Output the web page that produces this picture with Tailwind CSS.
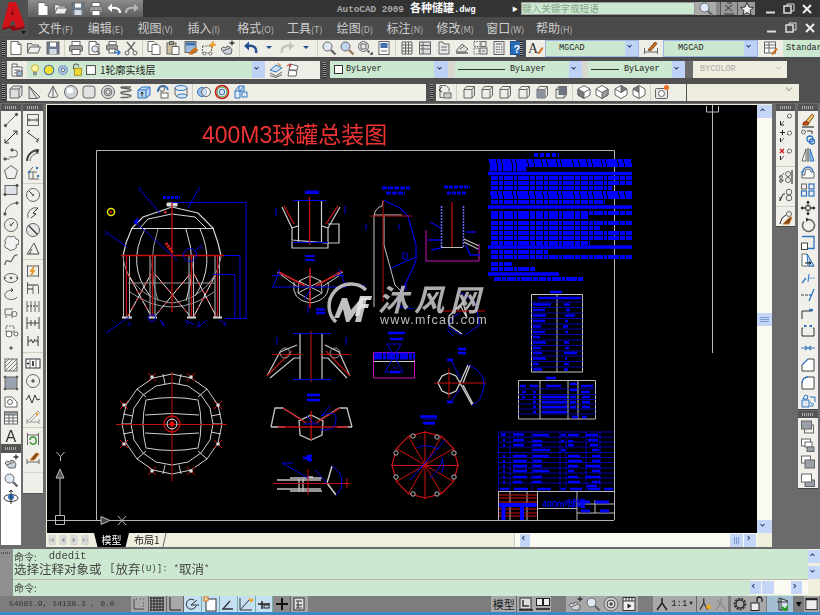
<!doctype html>
<html lang="zh">
<head>
<meta charset="utf-8">
<title>AutoCAD 2009</title>
<script src="https://cdn.jsdelivr.net/npm/@tailwindcss/browser@4"></script>
</head>
<body class="w-[820px] h-[615px] overflow-hidden bg-[#6b6b6b] text-[#222] font-['Noto_Sans_CJK_SC',sans-serif] blur-[0.35px]">

<!-- title + menu -->
<div class="flex h-[38px] bg-[#4a4a4a]">
  <div class="relative w-[28px] h-[37px] bg-[#505050]">
    <svg class="w-[28px] h-[37px]" viewBox="0 0 28 37">
      <path d="M9 2h7l9 24-9 2-2-7H11l-1 5-8 2z" fill="#d3111b"/>
      <path d="M11 15h3l-1.500-6z" fill="#7d0a10"/>
      <path d="M2 28l8-2 4-1 2 3 9-2-2 3-10 2-3-3-7 2z" fill="#8e0b12"/>
      <path d="M21 31h5l-2.500 3z" fill="#111"/>
    </svg>
  </div>
  <div class="flex-1 flex flex-col">
    <div class="h-[17px] flex items-center bg-[#333]">
      <div class="w-[115px] h-[17px] pl-[6px] flex items-center bg-gradient-to-b from-[#8c8c8c] to-[#5e5e5e]" data-icons="new open save print qundo qredo" data-cell="w-[17.800px]"></div>
      <div class="w-[175px] ml-[194px] flex items-baseline whitespace-nowrap">
        <span class="font-['Liberation_Mono',monospace] text-[9.300px] font-bold text-[#aaa]">AutoCAD 2009</span>
        <span class="ml-[6px] text-[11px] font-bold text-white">各种储罐</span><span class="font-['Liberation_Mono',monospace] text-[9px] font-bold text-white">.dwg</span>
      </div>
      <div class="w-[9px] text-[6px] text-white">&#9654;</div>
      <div class="w-[174px] h-[13px] bg-[#cde8d0] border border-[#999] flex items-center text-[9.600px] leading-none text-[#86a58a] whitespace-nowrap">键入关键字或短语</div>
      <div class="w-[21px] h-[13px] bg-[#aaa] flex items-center justify-center" data-icons="zoom" data-cell="w-[16px]"></div>
      <div class="w-[4px] h-[13px] bg-[#888]"></div>
      <div class="w-[17px] h-[13px] bg-[#999] border-l border-[#555] flex items-center justify-center" data-icons="comm" data-cell="w-[16px]"></div>
      <div class="w-[18px] h-[13px] bg-[#999] border-l border-[#555] flex items-center justify-center" data-icons="star" data-cell="w-[16px]"></div>
      <div class="flex ml-[7px] text-white" data-icons="wmin wmax wclose" data-cell="w-[18px]"></div>
    </div>
    <div class="h-[21px] flex items-center pl-[10px] text-[12px] leading-none text-[#cfcfcf] whitespace-nowrap">
      <span class="w-[49.800px]">文件<span class="text-[9px] text-[#bbb]">(F)</span></span>
      <span class="w-[49.800px]">编辑<span class="text-[9px] text-[#bbb]">(E)</span></span>
      <span class="w-[49.800px]">视图<span class="text-[9px] text-[#bbb]">(V)</span></span>
      <span class="w-[49.800px]">插入<span class="text-[9px] text-[#bbb]">(I)</span></span>
      <span class="w-[49.800px]">格式<span class="text-[9px] text-[#bbb]">(O)</span></span>
      <span class="w-[49.800px]">工具<span class="text-[9px] text-[#bbb]">(T)</span></span>
      <span class="w-[49.800px]">绘图<span class="text-[9px] text-[#bbb]">(D)</span></span>
      <span class="w-[49.800px]">标注<span class="text-[9px] text-[#bbb]">(N)</span></span>
      <span class="w-[49.800px]">修改<span class="text-[9px] text-[#bbb]">(M)</span></span>
      <span class="w-[49.800px]">窗口<span class="text-[9px] text-[#bbb]">(W)</span></span>
      <span class="w-[49.800px]">帮助<span class="text-[9px] text-[#bbb]">(H)</span></span>
      <div class="flex ml-auto mr-[1px]" data-icons="wmin wmax wclose" data-cell="w-[19px]"></div>
    </div>
  </div>
</div>

<!-- standard toolbar + styles -->
<div class="h-[20px] flex items-center bg-[#505050]">
  <div class="w-[3px] h-[15px] ml-[2px] mr-[2px] bg-[repeating-linear-gradient(0deg,#222_0_1px,#999_1px_2px)]"></div>
  <div class="w-[509px] h-[17px] flex items-center bg-[#eeede6]" data-icons="new open save | print preview plot cut | copy paste match blockedit pan | undo drop redo drop | zoom zoomb zoomwin prop | palette grid tool stamp tpal calc help" data-cell="w-[18.300px]"></div>
  <div class="w-[3px] h-[15px] ml-[4px] mr-[3px] bg-[repeating-linear-gradient(0deg,#222_0_1px,#999_1px_2px)]"></div>
  <div class="w-[19px] h-[17px] flex items-center justify-center bg-[#eeede6]" data-icons="stylea" data-cell="w-[16px]"></div>
  <div class="w-[94px] h-[17px] flex bg-[#cde8d0] border border-[#9cb6e6]">
    <span class="flex-1 pl-[13px] font-['Liberation_Mono',monospace] text-[8.500px] leading-[15px]">MGCAD</span>
    <span class="w-[13px] flex items-center justify-center bg-[#bfd2f6]" data-icons="chev" data-cell="w-[9px]"></span>
  </div>
  <div class="w-[24px] h-[17px] flex items-center justify-center bg-[#eeede6]" data-icons="styled" data-cell="w-[16px]"></div>
  <div class="w-[95px] h-[17px] flex bg-[#cde8d0] border border-[#9cb6e6]">
    <span class="flex-1 pl-[14px] font-['Liberation_Mono',monospace] text-[8.500px] leading-[15px]">MGCAD</span>
    <span class="w-[13px] flex items-center justify-center bg-[#bfd2f6]" data-icons="chev" data-cell="w-[9px]"></span>
  </div>
  <div class="w-[25px] h-[17px] flex items-center justify-center bg-[#eeede6]" data-icons="stylet" data-cell="w-[16px]"></div>
  <div class="flex-1 h-[17px] pl-[3px] bg-[#cde8d0] overflow-hidden font-['Liberation_Mono',monospace] text-[8.500px] leading-[16px]">Standard</div>
</div>

<!-- layers + properties -->
<div class="h-[23px] flex items-center bg-[#505050]">
  <div class="w-[3px] h-[16px] ml-[2px] mr-[2px] bg-[repeating-linear-gradient(0deg,#222_0_1px,#999_1px_2px)]"></div>
  <div class="w-[313px] h-[18px] flex items-center bg-[#eeede6]">
    <div class="w-[20px] flex justify-center" data-icons="layers" data-cell="w-[16px]"></div>
    <div class="w-[238px] h-[17px] flex items-center bg-[#cde8d0]">
      <div class="flex pl-[1px]" data-icons="bulb sun freeze lock box" data-cell="w-[14px]"></div>
      <span class="flex-1 pl-[2px] text-[10px] leading-none whitespace-nowrap">1轮廓实线层</span>
      <span class="w-[13px] h-[17px] flex items-center justify-center bg-[#bfd2f6]" data-icons="chev" data-cell="w-[9px]"></span>
    </div>
    <div class="flex ml-[2px]" data-icons="layerprev layerstate" data-cell="w-[18px]"></div>
  </div>
  <div class="w-[3px] h-[16px] ml-[3px] mr-[4px] bg-[repeating-linear-gradient(0deg,#222_0_1px,#999_1px_2px)]"></div>
  <div class="w-[118px] h-[17px] flex items-center bg-[#cde8d0]">
    <div class="w-[9px] h-[9px] ml-[4px] mr-[3px] bg-white border border-[#333]"></div>
    <span class="flex-1 font-['Liberation_Mono',monospace] text-[8.500px] leading-none">ByLayer</span>
    <span class="w-[14px] h-[17px] flex items-center justify-center bg-[#bfd2f6]" data-icons="chev" data-cell="w-[9px]"></span>
  </div>
  <div class="w-[7px] h-[17px] bg-[#d9d8d0]"></div>
  <div class="w-[127px] h-[17px] flex items-center bg-[#cde8d0]">
    <div class="w-[47px] h-[1px] ml-[3px] mr-[5px] bg-[#333]"></div>
    <span class="flex-1 font-['Liberation_Mono',monospace] text-[8.500px] leading-none">ByLayer</span>
    <span class="w-[13px] h-[17px] flex items-center justify-center bg-[#bfd2f6]" data-icons="chev" data-cell="w-[9px]"></span>
  </div>
  <div class="w-[6px] h-[17px] bg-[#d9d8d0]"></div>
  <div class="w-[97px] h-[17px] flex items-center bg-[#cde8d0]">
    <div class="w-[28px] h-[1px] ml-[3px] mr-[5px] bg-[#333]"></div>
    <span class="flex-1 font-['Liberation_Mono',monospace] text-[8.500px] leading-none">ByLayer</span>
    <span class="w-[13px] h-[17px] flex items-center justify-center bg-[#bfd2f6]" data-icons="chev" data-cell="w-[9px]"></span>
  </div>
  <div class="w-[8px] h-[17px] bg-[#6b6b6b]"></div>
  <div class="w-[94px] h-[17px] flex items-center bg-[#efeddd]">
    <span class="flex-1 pl-[7px] font-['Liberation_Mono',monospace] text-[8.500px] leading-none text-[#aaa]">BYCOLOR</span>
    <span class="w-[14px] flex items-center justify-center" data-icons="chevg" data-cell="w-[9px]"></span>
  </div>
</div>

<!-- solids + views -->
<div class="h-[22px] flex items-center bg-[#505050]">
  <div class="w-[3px] h-[16px] ml-[2px] mr-[2px] bg-[repeating-linear-gradient(0deg,#222_0_1px,#999_1px_2px)]"></div>
  <div class="relative w-[419px] h-[17px] flex items-center bg-[#eeede6]" data-icons="sbox wedge cone sphere cyl torus helix press sweep loft | union subtract intersect" data-cell="w-[18.300px]"></div>
  <div class="w-[3px] h-[16px] ml-[4px] mr-[3px] bg-[repeating-linear-gradient(0deg,#222_0_1px,#999_1px_2px)]"></div>
  <div class="w-[250px] h-[17px] flex items-center bg-[#eeede6]" data-icons="vnamed | vtop vbot vleft vright vfront vback | iso1 iso2 iso3 iso4 | camera" data-cell="w-[18.400px]"></div>
  <div class="w-[112px] h-[17px] ml-[1px] flex items-center justify-end bg-[#efeddd]" data-icons="chevg" data-cell="w-[14px]"></div>
</div>

<!-- workspace -->
<div class="h-[446px] flex pt-[1px]">
  <div class="w-[46px] flex shrink-0 items-start">
    <div class="w-[20px] ml-[1px] bg-[#f0efe9]">
      <div class="h-[7px] flex items-center justify-center bg-[#555]"><div class="w-[12px] h-[3px] bg-[repeating-linear-gradient(90deg,#aaa_0_1px,#555_1px_2px)]"></div></div>
      <div class="flex flex-col" data-icons="line xline pline polygon rect arc circle cloud spline ellipse earc insert mkblock point hatch gradient region table mtext" data-cell="h-[17.550px]" data-sep="v"></div>
      <div class="h-[9px] flex items-center justify-center bg-[#555]"><div class="w-[12px] h-[3px] bg-[repeating-linear-gradient(90deg,#aaa_0_1px,#555_1px_2px)]"></div></div>
      <div class="h-[92px] flex flex-col bg-white" data-icons="pan zoom orbit" data-cell="h-[17.600px]" data-sep="v"></div>
    </div>
    <div class="w-[20px] ml-[2px] bg-[#f0efe9] border-b border-[#555]">
      <div class="h-[7px] flex items-center justify-center bg-[#555]"><div class="w-[12px] h-[3px] bg-[repeating-linear-gradient(90deg,#aaa_0_1px,#555_1px_2px)]"></div></div>
      <div class="flex flex-col" data-icons="dlin dali darc dord | drad djog ddia dang | dquick dbase dcont dspace dbreak | dtol dcen dinsp djogl | dupd dreas" data-cell="h-[17.600px]" data-sep="v"></div>
      <div class="h-[28px] flex items-end pb-[20px]"><div class="w-full h-px bg-[#d8d6c8]"></div></div>
    </div>
  </div>

  <!-- drawing area -->
  <div class="w-[726px] h-[443px] shrink-0 flex flex-col bg-[#f0eedd]">
    <div class="h-[429px] flex pt-[1px] pl-[1px]">
      <svg class="w-[710px] h-[428px] shrink-0 bg-black" viewBox="47 105 710 428" fill="none" stroke-width="1">
        <!-- sheet frame -->
        <path d="M96.500 520V150.500H614.500V520M47 520.500H614" stroke="#b4b4b4"/>
        <text x="202" y="143" font-size="23" fill="#ee3333" font-family="Liberation Sans,Noto Sans CJK SC,sans-serif">400M3球罐总装图</text>
        <path d="M712.500 105V353M706.500 106v6h12v-6M712.500 106v6" stroke="#bbb"/>
        <circle cx="111" cy="212" r="3.500" stroke="#e8e800" stroke-width="1.500"/><circle cx="111" cy="212" r="1.200" fill="#c00"/>
        <!-- ucs -->
        <path d="M60 515V478M64 520.500H100M55.500 515.500h9v9h-9z" stroke="#bbb"/>
        <path d="M60 469l-4 9h8z" stroke="#bbb" fill="#555"/><path d="M101 516.500l9 4-9 4z" stroke="#bbb" fill="#444"/>
        <path d="M56.500 452l4 4.500 4-4.500M60.500 456.500V461M118 516l8 9M126 516l-8 9" stroke="#bbb"/>

        <!-- sphere elevation -->
        <g stroke="#d8d8d8">
          <path d="M123 256L126 243L132 228L143 217L172 207L198 213L213 228L218 243L221 256" stroke-width="1.200"/>
          <path d="M131 228.500H214M140 228L148 219L172 214L195 217L206 228M145 229Q126 265 150 296M186 229Q198 265 186 301M200 229Q216 265 195 296"/>
          <path d="M167 206h10v-3h-10z" fill="#ddd"/>
          <path d="M123.500 256V317M129.500 256V317M150 256V317M155 256V317M189 256V317M193.500 256V317M215 256V317M219.500 256V317" stroke="#bbb"/>
          <path d="M122 317.500H132M148 317.500H157M187 317.500H196M213 317.500H222" stroke-width="2"/>
        </g>
        <path d="M158 229Q146 265 158 301M123 256C125 280 145 300 172 303C198 300 218 280 221 256M128 283H215M130 292Q172 322 214 292" stroke="#999"/>
        <path d="M128 274L151 316M151 274L128 316M155 274L190 316M190 274L155 316M194 274L216 316M216 274L194 316" stroke="#eee"/>
        <path d="M128 274L151 316M151 274L128 316M155 274L190 316M190 274L155 316M194 274L216 316M216 274L194 316" stroke="#ee3333" stroke-dasharray="4 5"/>
        <path d="M172 203V312M121 255.500H224M126.500 256V316M152.500 256V316M191.500 256V316M217.500 256V316" stroke="#c41010" stroke-width="1.300"/>
        <g stroke="#0000e6">
          <path d="M172 202.500H246V319M224 255.500H240V319M213 274.500H235V319M225 318.500H246M140 190L160 213M198 190L188 208M107 233L127 247M133 220L177 260M129 317L106 333M160 320L165 326M185 320L195 325M207 320L197 328M220 320L226 325"/>
          <circle cx="190" cy="255" r="6.500"/><path d="M195 251L202 245"/>
          <path d="M163 197.500H180" stroke-width="3" stroke-dasharray="3 1"/>
          <path d="M135 224l3-5" stroke-width="3"/>
          <circle cx="152" cy="318" r="3.500"/>
        </g>
        <g fill="#0000e6" font-size="6" font-family="Liberation Sans,sans-serif">
          <text x="138" y="191">4</text><text x="197" y="191">2</text><text x="104" y="235">3</text><text x="200" y="249">1</text>
          <text x="128" y="326">6</text><text x="161" y="326">5</text><text x="185" y="326">7</text><text x="197" y="326">8</text><text x="224" y="326">1</text>
        </g>
        <path d="M166 243L173 253" stroke="#ee2222" stroke-width="3" stroke-dasharray="2 1"/>
        <path d="M163 212l3 2 1-3z" fill="#e33"/>

        <!-- sphere plan -->
        <g stroke="#d0d0d0">
          <path d="M222 424L218 443L207 459L191 470L172 474L153 470L137 459L126 443L122 424L126 405L137 389L153 378L172 374L191 378L207 389L218 405Z"/>
          <path d="M213 424L210 440L201 453L188 462L172 465L156 462L143 453L134 440L131 424L134 408L143 395L156 386L172 383L188 386L201 395L210 408Z"/>
          <path d="M146 400Q172 395 198 400Q204 424 198 448Q172 453 146 448Q140 424 146 400M145 415Q172 412 199 415M145 433Q172 436 199 433M131 424H122M213 424H222M163 374L165 384M181 374L179 384M163 474L165 465M181 474L179 465M137 389L146 397M207 389L198 397M137 459L146 451M207 459L198 451M123 414L133 416M221 414L211 416M123 434L133 432M221 434L211 432"/>
        </g>
        <path d="M172 372V481M116 424.500H227M148 373l8 8M156 373l-8 8M187 373l8 8M195 373l-8 8M120 401l8 8M128 401l-8 8M214 401l8 8M222 401l-8 8M120 440l8 8M128 440l-8 8M214 440l8 8M222 440l-8 8M148 467l8 8M156 467l-8 8M187 467l8 8M195 467l-8 8" stroke="#c41010"/>
        <circle cx="172" cy="424" r="8" stroke="#d01010" stroke-width="1.300"/><circle cx="172" cy="424" r="5" stroke="#eee"/><circle cx="172" cy="424" r="2.500" fill="#e01010"/>
        <g fill="#ddd"><circle cx="152" cy="377" r="1.800"/><circle cx="191" cy="377" r="1.800"/><circle cx="124" cy="405" r="1.800"/><circle cx="218" cy="405" r="1.800"/><circle cx="124" cy="444" r="1.800"/><circle cx="218" cy="444" r="1.800"/><circle cx="152" cy="471" r="1.800"/><circle cx="191" cy="471" r="1.800"/></g>

        <!-- section A -->
        <path d="M298.500 201V243M321.500 201V243M282 207L292 228L298 226M340 207L328 228L322 226M292 228L292 240L328 243L328 228M292 241v7h36v-7M328 224h11v19h-11" stroke="#ccc" stroke-width="1.200"/>
        <path d="M309.500 197V245M284 206L294 224M338 206L326 224" stroke="#c41010" stroke-width="1.300"/>
        <path d="M293 200.500H326M293 242.500H328M309.500 190H309.500M276 208v8M345 206v8" stroke="#0000e6"/>
        <path d="M305 191.500H319M305 193H319" stroke="#0000e6" stroke-width="2"/>
        <!-- star section -->
        <path d="M310 276L321 281L322 293L310 300L298 293L299 281ZM277 272L301 283M343 272L320 283M281 275L298 287M340 275L322 287M310 276V300M299 281L322 293M321 281L298 293M294 282Q291 300 310 303Q331 300 328 282" stroke="#c8c8c8"/>
        <path d="M279 272L305 286M342 271L316 286M310 268V308" stroke="#d01818" stroke-width="1.500"/>
        <path d="M272 287H346M273 287L280 269M346 287L339 269M272 276l9-1M344 276l-9-1M308 305V313M310 290L304 300" stroke="#0000e6"/>
        <path d="M316 309.500H325M316 313H325" stroke="#0000e6" stroke-width="2.500"/>
        <path d="M305 256H315M305 260H315" stroke="#0000e6" stroke-width="2"/>
        <!-- tall vessel part -->
        <path d="M374 216V307M374 216Q375 208 382 206L383 201M374 215H402M384 245L395 285L402 292M384 245L384 216" stroke="#c8c8c8"/>
        <path d="M383 200L400 208L408 216L416 245L416 260L412 270L400 295L397 306L413 309M391 268L416 257" stroke="#0000e6" stroke-width="1.200"/>
        <path d="M383 200V302M370 216H412" stroke="#b01010"/>
        <path d="M382 188H410M386 193H405" stroke="#0000e6" stroke-width="3" stroke-dasharray="5 1"/>
        <path d="M366 224v6M399 224v6M364 284v7M406 284v7M403 253h4v6h-4z" stroke="#0000e6"/>
        <!-- nozzle detail -->
        <path d="M441.500 206V247M463.500 206V247" stroke="#6b6bff" stroke-dasharray="2 1" stroke-width="1.500"/>
        <path d="M452 202V247" stroke="#b01010" stroke-width="1.300"/>
        <path d="M441 247.500H463M464 239L479 246M464 242L478 249" stroke="#bbb" stroke-width="1.200"/>
        <path d="M426 230V261H479V244" stroke="#c814b4"/>
        <path d="M444 187H470M447 193H467" stroke="#0000e6" stroke-width="3" stroke-dasharray="4 1"/>
        <path d="M430 222L441 228M428 240L441 240M431 250L441 248M466 232L476 232M470 255h10M466 245L470 255" stroke="#0000e6" stroke-width="1.300"/>

        <!-- notes -->
        <g stroke="#0000ff" stroke-width="3.800" stroke-dasharray="7 1 4 1 9 1 3 1 11 1 5 1">
          <path d="M534 155H559" stroke-dasharray="4 2"/>
          <path d="M489 161H632M490 165H632M490 169H526M491 178H632M491 183H632M491 188H612M490 193H632M491 197H632M491 202H605M491 213H632M491 217H588M491 223H632M491 228H600M491 233H632M491 238H632M491 243H590M491 252H548M491 257H632M491 264H512M491 269H535M494 279H584"/>
        </g>
        <path d="M488 173.500H632M488 207H632M488 247H632M488 274H559" stroke="#0000ff" stroke-width="3.500"/>

        <!-- spec tables -->
        <path d="M531.500 294.500H582.500V372H531.500ZM557 294.500V372" stroke="#c0c0c0"/>
        <path d="M531 302H583M531 307.500H583M531 313H583M531 318.500H583M531 324H583M531 329H583M531 334.500H583M531 340H583M531 345.500H583M531 351H583M531 356H583M531 361.500H583M531 367H583" stroke="#0000d8" stroke-width=".8"/>
        <path d="M550 292H562M538 298H581M533 304.500H551M533 310H545M533 315.500H546M533 321H545M533 326.500H541M533 332H545M533 337H540M533 342.500H546M533 348H541M533 353H542M533 358.500H546M533 364H539M533 369.500H542M564 304.500H570M566 310H570M565 315.500H575M565 321H568M563 326.500H568M565 332H568M564 342.500H569M565 348H569M564 353H577M565 358.500H567M564 364H569M564 369.500H568" stroke="#0000ff" stroke-width="2.600"/>
        <path d="M518.500 380.500H595.500V419H518.500ZM540 381V419M568 381V419M578 381V419" stroke="#c0c0c0"/>
        <path d="M518 389H596M518 394.500H596M518 399.500H596M518 404H596M518 409H596M518 414H596" stroke="#0000d8" stroke-width=".8"/>
        <path d="M546 378H556M520 386H526M530 386H538M546 386H561M570 384H577M581 386H593M522 392H526M533 392H536M570 390H577M581 392H590M522 397H525M533 397H536M542 397H567M570 397H576M582 397H590M533 402H536M542 402H567M570 402H576M582 402H590M533 407H536M542 407H567M570 407H576M582 407H590M533 412H536M542 412H567M572 417H578M582 417H587" stroke="#0000ff" stroke-width="2.400"/>

        <!-- parts list + title block -->
        <path d="M498 432H614M498 437H614M498 442H614M498 447H614M498 452.500H614M498 457.500H614M498 462.500H614M498 468H614M498 473H614M498 478H614M498 483H614M510 432V491M532 432V491M560 432V491M566 432V491M586 432V491M600 432V491M498.500 432V491" stroke="#0000d8" stroke-width=".8"/>
        <path d="M501 434.500H506M513 434.500H524M533 435H549M561 435H565M568 435H579M586 435H598M503 440H505M513 440H524M533 441H542M561 441H564M568 441H573M588 440H598M503 445H505M513 445H524M533 445H542M568 445H574M590 445H598M533 450H550M561 450H565M592 450H599M503 456H505M513 456H527M533 456H549M568 456H580M592 456H600M503 461H505M513 461H527M533 461H542M568 461H582M592 461H600M503 466H505M513 466H527M533 466H542M568 466H578M586 466H600M503 471H505M513 471H527M533 471H549M568 471H574M592 471H600M503 477H505M513 477H527M533 477H542M568 477H578M586 477H600M503 482H505M513 482H522M533 482H542M568 482H580M592 482H600M500 489H509M514 489H528M537 489H551M561 489H565M570 489H582M588 489H600M604 489H613M587 486H597" stroke="#0000ff" stroke-width="2.400"/>
        <path d="M498.500 491.500H614M537.500 491.500V520M577 491.500V520M537.500 508.500H577M577 504H614M577 513H614M595 500V513M498.500 491V520M510 491V520M527 491V520" stroke="#bbb"/>
        <path d="M499 495H537M499 498H537M499 502H537M499 509H537M499 513H537M499 516H537" stroke="#c81010"/>
        <path d="M499 505H535M503.500 505V520M522 505V520" stroke="#0000ff" stroke-width="4"/>
        <path d="M500 505H537" stroke="#0000ff" stroke-width="3"/>
        <text x="542" y="507" font-size="9" fill="#0000ff" font-family="Liberation Sans,Noto Sans CJK SC,sans-serif" stroke="#0000ff" stroke-width=".3">400m³球罐</text>
        <path d="M580 502H590M595 502H609M581 511H590M600 511H609" stroke="#0000ff" stroke-width="3"/>

        <!-- section G -->
        <path d="M300 333V379M322 333V379M267 376L280 352L297 345M350 376L339 352L325 345M270 378L294 358H300M347 378L328 358H322" stroke="#c8c8c8" stroke-width="1.200"/>
        <path d="M311 331V382M272 354.500H302M320 354.500H350M267 376L292 351M350 376L326 351" stroke="#b81010" stroke-width="1.200"/>
        <path d="M293 333.500H331M293 379.500H331M277 337v8M346 337v8" stroke="#0000e6"/>
        <circle cx="285" cy="353" r="5" stroke="#999"/><circle cx="335" cy="353" r="5" stroke="#999"/>
        <!-- magenta detail -->
        <path d="M373.500 352.500H414.500V378H373.500Z" stroke="#c814b4"/>
        <path d="M374 356H415" stroke="#0000e6" stroke-width="7" stroke-dasharray="8 1 3 1"/>
        <path d="M374 361.500H415" stroke="#ccc"/>
        <path d="M387 344L403 372H385L401 344ZM393 368H398" stroke="#0000e6"/>
        <path d="M388 333H405M390 339H403M390 372H400" stroke="#0000ff" stroke-width="2.500"/>
        <!-- star section 2 -->
        <path d="M311 415L323 421L322 435L311 440L300 435L299 421ZM283 408L302 420M339 408L320 420M271 427L275 408L283 408M352 427L347 408L339 408M271 427H285M352 427H337" stroke="#c4c4c4" stroke-width="1.300"/>
        <path d="M283 408L306 423M340 408L316 423M311 411V440M278 427H348" stroke="#c41010" stroke-width="1.300"/>
        <path d="M307 416L315 424M321 416Q340 408 335 424Q335 430 320 430M321 416L331 405M303 424H319" stroke="#0000e6"/>
        <path d="M307 395H320M307 400H320" stroke="#0000ff" stroke-width="2.500"/>
        <!-- bottom section -->
        <path d="M277 480H321M277 489H321M290 478H322M290 491H322M299 479V492M303 479V492M308 477h5" stroke="#c4c4c4" stroke-width="1.300"/>
        <path d="M332 466L327 483L336 495" stroke="#ccc" stroke-width="1.500"/>
        <path d="M308 469V495M273 483.500H350M347 478v10" stroke="#c41010"/>
        <path d="M332 466Q342 472 342 483Q342 490 336 495M282 463H293M282 463L308 478M315 470L327 483" stroke="#0000e6"/>
        <path d="M307 456H312M307 460H312M303 458H311" stroke="#0000ff" stroke-width="2.500"/>
        <!-- right small section -->
        <path d="M449 373L456 376L460 383L456 391L449 394L442 391L438 383L442 376ZM460 383L468 365M460 383L472 405M463 383L470 365M463 385L473 404" stroke="#d0d0d0" stroke-width="1.300"/>
        <path d="M434 383H486M449 368V398" stroke="#c01010"/>
        <path d="M468 365Q485 372 484 385Q482 402 472 405M460 378L450 358M460 389L450 403" stroke="#0000e6"/>
        <path d="M458 349H466M458 353H466M447 360H453M447 402H453" stroke="#0000ff" stroke-width="2.500"/>
        <path d="M460 313Q448 318 449 328L462 335M460 292L475 302L480 325L465 335M447 330l6 6" stroke="#0000e6"/>
        <path d="M462 298L467 318L460 305L449 316L449 325L462 334" stroke="#ccc" stroke-width="1.200"/>
        <path d="M440 311H485" stroke="#c01010"/>
        <!-- flange -->
        <path d="M458 465L453.600 481.500L441.500 493.600L425 498L408.500 493.600L396.400 481.500L392 465L396.400 448.500L408.500 436.400L425 432L441.500 436.400L453.600 448.500Z" stroke="#d01010" stroke-width="1.200"/>
        <path d="M425 431V499M391 465.500H459M396.400 448.500L453.600 481.500M396.400 481.500L453.600 448.500M408.500 436.400L441.500 493.600M408.500 493.600L441.500 436.400" stroke="#d01010"/>
        <path d="M417 448Q425 443 439 449M445 440L410 480M442 458Q445 465 442 473M430 478Q440 470 443 458M422 419H437M424 424H435" stroke="#0000e6"/>
        <path d="M420 416.500H437M423 423H435" stroke="#0000ff" stroke-width="2.500"/>
        <g stroke="#bbb" fill="#000"><circle cx="413" cy="436" r="2.200"/><circle cx="437" cy="437" r="2.200"/><circle cx="454" cy="453" r="2.200"/><circle cx="454" cy="477" r="2.200"/><circle cx="437" cy="494" r="2.200"/><circle cx="413" cy="494" r="2.200"/><circle cx="396" cy="477" r="2.200"/><circle cx="396" cy="453" r="2.200"/></g>

        <!-- watermark -->
        <path d="M336 322A21 21 0 1 1 366 290" stroke="#b8b8b8" stroke-width="3.500"/>
        <path d="M334 318l8-20h5l4 12 10-12h6l-6 24h-6l3-13-9 13h-3l-3-13-4 9z" fill="#c0c0c0"/>
        <path d="M360 296h12l-1 4h-8l-1 4h7l-1 4h-7l-2 8h-4z" fill="#e8e8e8" opacity=".9"/>
        <text x="378" y="311" font-size="30" font-weight="700" fill="#c4c4c4" fill-opacity=".88" letter-spacing="6" font-style="italic" font-family="Noto Sans CJK SC,sans-serif">沐风网</text>
        <text x="380" y="324" font-size="12.500" fill="#bdbdbd" letter-spacing="1.300" font-family="Liberation Sans,sans-serif">www.mfcad.com</text>
      </svg>
      <div class="flex-1 flex flex-col justify-between bg-[#fbfaf2]">
        <div class="h-[13px] flex items-center justify-center bg-[#c6d6f6]" data-icons="chevup" data-cell="w-[9px]"></div>
        <div class="h-[13px] flex flex-col justify-center gap-px px-[3px] bg-[#c6d6f6]"><div class="h-px bg-[#7f9ad0]"></div><div class="h-px bg-[#7f9ad0]"></div><div class="h-px bg-[#7f9ad0]"></div></div>
        <div class="h-[13px] flex items-center justify-center bg-[#c6d6f6]" data-icons="chev" data-cell="w-[9px]"></div>
      </div>
    </div>
    <div class="h-[14px] flex items-center bg-[#f0eedd] text-[10px] leading-none whitespace-nowrap">
      <div class="flex w-[48px] pl-[2px]" data-icons="first prev next last" data-cell="w-[11px]"></div>
      <div class="w-[35px] h-[14px] flex items-center justify-center bg-black text-white [clip-path:polygon(0_0,100%_0,90%_100%,10%_100%)]">模型</div>
      <div class="w-[36px] h-[14px] flex items-center justify-center border-r border-[#666] -skew-x-12"><span class="skew-x-12">布局1</span></div>
      <div class="w-[349px]"></div>
      <div class="w-[243px] h-[14px] flex items-center justify-between bg-[#fbfaf2] border-l border-[#ccc]">
        <div class="w-[10px] h-[13px] ml-[5px] flex items-center justify-center bg-[#c6d6f6]" data-icons="chevl" data-cell="w-[9px]"></div>
        <div class="flex mr-[1px]">
          <div class="w-[13px] h-[13px] mr-px flex items-center justify-center gap-px bg-[#c6d6f6]"><div class="w-px h-[7px] bg-[#7f9ad0]"></div><div class="w-px h-[7px] bg-[#7f9ad0]"></div><div class="w-px h-[7px] bg-[#7f9ad0]"></div></div>
          <div class="w-[12px] h-[13px] flex items-center justify-center bg-[#c6d6f6]" data-icons="chevr" data-cell="w-[9px]"></div>
        </div>
      </div>
      <div class="flex-1 bg-[#f0eedd]"></div>
    </div>
  </div>

  <!-- right toolbars -->
  <div class="flex items-start pl-[4px]">
    <div class="w-[19px] bg-[#f0efe9] border-b border-[#444]">
      <div class="h-[7px] flex items-center justify-center bg-[#555]"><div class="w-[12px] h-[3px] bg-[repeating-linear-gradient(90deg,#aaa_0_1px,#555_1px_2px)]"></div></div>
      <div class="flex flex-col" data-icons="mlead mleadadd mleaddel | mleadali mleadcol | mleadstyle" data-cell="h-[17.550px]" data-sep="v"></div>
    </div>
    <div class="w-[20px] ml-[3px]">
      <div class="bg-[#f0efe9] border-b border-[#444]">
        <div class="h-[7px] flex items-center justify-center bg-[#555]"><div class="w-[12px] h-[3px] bg-[repeating-linear-gradient(90deg,#aaa_0_1px,#555_1px_2px)]"></div></div>
        <div class="flex flex-col" data-icons="erase mcopy mirror offset array move rotate scale stretch trim extend breakp brk join chamfer fillet explode" data-cell="h-[17.550px]" data-sep="v"></div>
      </div>
      <div class="mt-[1px] bg-[#f0efe9] border-b border-[#444]">
        <div class="h-[7px] flex items-center justify-center bg-[#555]"><div class="w-[12px] h-[3px] bg-[repeating-linear-gradient(90deg,#aaa_0_1px,#555_1px_2px)]"></div></div>
        <div class="flex flex-col" data-icons="ofront oback oabove obelow" data-cell="h-[17.500px]" data-sep="v"></div>
      </div>
    </div>
  </div>
</div>

<!-- command line -->
<div class="h-[47px] flex bg-[#cde8d0]">
  <div class="w-[13px] bg-[#8f8f8f] bg-[repeating-linear-gradient(90deg,#555_0_1px,#8f8f8f_1px_2px)] bg-no-repeat bg-[length:10px_2px] bg-[position:1px_3px]"></div>
  <div class="flex-1 flex flex-col text-[#444] whitespace-nowrap">
    <div class="h-[31px] pl-[1px] pt-[1px] border-b border-[#bdb9a8]">
      <div class="h-[13px] flex items-center text-[10px] leading-none">命令:<span class="ml-[12px] font-['Liberation_Mono',monospace] text-[10.500px]">ddedit</span></div>
      <div class="h-[12px] flex items-center text-[12.500px] leading-none">选择注释对象或<span class="ml-[8px] font-['Liberation_Mono',monospace] text-[10px]">[</span>放弃<span class="font-['Liberation_Mono',monospace] text-[9px]">(U)]:</span><span class="ml-[6px] font-['Liberation_Mono',monospace] text-[9px]">*</span>取消<span class="font-['Liberation_Mono',monospace] text-[9px]">*</span></div>
    </div>
    <div class="flex-1 flex">
      <div class="flex-1 pl-[1px] text-[10px] leading-[16px]">命令:</div>
      <div class="flex items-center w-[58px] h-[15px] bg-[#fbfaf2]">
        <div class="w-[11px] h-[13px] flex items-center justify-center bg-[#c6d6f6]" data-icons="chevl" data-cell="w-[9px]"></div>
        <div class="w-[12px] h-[13px] ml-px bg-[#c6d6f6]"></div>
        <div class="w-[11px] h-[13px] ml-[17px] flex items-center justify-center bg-[#c6d6f6]" data-icons="chevr" data-cell="w-[9px]"></div>
      </div>
    </div>
  </div>
  <div class="w-[12px] flex flex-col bg-[#f0eedd]">
    <div class="h-[13px] mt-[1px] flex items-center justify-center bg-[#c6d6f6]" data-icons="chevup" data-cell="w-[9px]"></div>
    <div class="h-[13px] mt-[3px] flex items-center justify-center bg-[#c6d6f6]" data-icons="chev" data-cell="w-[9px]"></div>
  </div>
</div>

<!-- status bar -->
<div class="h-[16px] flex items-center bg-[#7d7d7d] whitespace-nowrap">
  <div class="w-[131px] pl-[9px] font-['Liberation_Mono',monospace] text-[8px] leading-none text-[#333]">54081.9, 14138.3 , 0.0</div>
  <div class="flex h-[16px] bg-[#a8a8a8]" data-icons="ssnap sgrid sortho" data-cell="w-[17.800px] border-r border-[#666]"></div>
  <div class="flex h-[16px] bg-[#c4dff2]" data-icons="spolar sosnap sotrack sducs sdyn" data-cell="w-[17.800px] border-r border-[#7aa]"></div>
  <div class="flex h-[16px] bg-[#8a8a8a]" data-icons="slw" data-cell="w-[17.400px] border-r border-[#666]"></div>
  <div class="flex h-[16px] bg-[#a8a8a8]" data-icons="sqp" data-cell="w-[17.400px]"></div>
  <div class="w-[183px]"></div>
  <div class="w-[25px] h-[16px] flex items-center justify-center bg-[#a8a8a8] text-[11px] leading-none text-[#222]">模型</div>
  <div class="flex h-[16px] bg-[#a8a8a8] border-l border-[#666]" data-icons="slayout slayouts" data-cell="w-[17px]"></div>
  <div class="flex h-[16px] ml-[15px] bg-[#a8a8a8]" data-icons="pan zoom swheel sshow" data-cell="w-[18px]"></div>
  <div class="w-[15px]"></div>
  <div class="w-[43px] h-[16px] flex items-center bg-[#a8a8a8] font-['Liberation_Mono',monospace] text-[9px] leading-none">
    <span class="flex" data-icons="anno" data-cell="w-[18px]"></span>1:1<span class="ml-[2px] text-[6px]">&#9660;</span>
  </div>
  <div class="flex h-[16px] bg-[#a8a8a8] border-l border-[#666]" data-icons="annoa annob" data-cell="w-[15.500px]"></div>
  <div class="w-[3px]"></div>
  <div class="flex h-[16px] bg-[#a8a8a8]" data-icons="gear slock" data-cell="w-[17.500px]"></div>
  <div class="flex h-[16px] ml-[1px] bg-[#a4bfd4]" data-icons="stray" data-cell="w-[26px]"></div>
  <div class="w-[11px] text-center text-[6px] leading-none text-black">&#9660;</div>
  <div class="flex h-[16px] bg-[#a8a8a8]" data-icons="swin" data-cell="w-[15px]"></div>
</div>
<div class="h-[3px] bg-[#3f88c8]"></div>

<script>
  // icon markup by name, all on a 16 x 16 grid
  const B = '#2f74c0', O = '#d0701c', R = '#d01818', D = '#555';
  const cube = (s, f) => `<path d="M3 5.500h8v8.500H3zM3 5.500l2.500-3h8v8.500L11 14M11 5.500l2.500-3" />` + (f ? `<path d="${f}" fill="${s}" stroke="none"/>` : '');
  const page = '<path d="M3 1.500h7l3 3v10H3z" fill="#fff"/><path d="M10 1.500v3h3"/>';
  const mag = '<circle cx="6.500" cy="6.500" r="4.500" fill="#dfe9f6"/><path d="M10 10l4.500 4.500" stroke-width="2.400"/>';
  const dim = (mid) => `<path d="M2.500 2v12M13.500 2v12" />` + mid;
  const wave = '<path d="M2.500 13L6 9M9 6l4-3.500"/><circle cx="11.500" cy="4" r="2" fill="#fff"/>';
  const I = {
    new: page,
    open: '<path d="M1.500 13V3.500h4l1 1.500h6v2" fill="#ddd"/><path d="M1.500 13L4 7h10.500L12 13z" fill="#eee"/>',
    save: '<rect x="2" y="2" width="12" height="12" fill="#6c7b8c"/><rect x="5" y="2.500" width="6" height="4" fill="#fff" stroke="none"/><rect x="4.500" y="9" width="7" height="5" fill="#d5dbe4" stroke="none"/>',
    print: '<rect x="4" y="1.500" width="8" height="4" fill="#fff"/><rect x="1.500" y="5.500" width="13" height="6" rx="1.500" fill="#9a9a9a"/><rect x="4" y="9.500" width="8" height="5" fill="#fff"/>',
    qundo: '<path d="M14 12c0-4-3-6-9-5" stroke="#fff" stroke-width="2.200"/><path d="M6 2.500L1.500 7 6 11z" fill="#fff" stroke="none"/>',
    qredo: '<path d="M2 12c0-4 3-6 9-5" stroke="#b8b8b8" stroke-width="2.200"/><path d="M10 2.500L14.500 7 10 11z" fill="#b8b8b8" stroke="none"/>',
    preview: page + '<circle cx="9" cy="9" r="3.200" fill="#dfe9f6"/><path d="M11 11l3 3" stroke-width="1.600"/>',
    plot: '<rect x="4" y="1.500" width="7" height="3.500" fill="#fff"/><rect x="1.500" y="5" width="11" height="5" rx="1" fill="#9a9a9a"/><rect x="4" y="9" width="6" height="4" fill="#fff"/><path d="M9 12.500h6M12.500 10l2.500 2.500-2.500 2.500" stroke="' + B + '" stroke-width="1.500"/>',
    cut: '<path d="M4 2l7 9M12 2L5 11" stroke-width="1.300"/><circle cx="4" cy="13" r="2"/><circle cx="12" cy="13" r="2"/>',
    copy: '<path d="M2 1.500h6l2 2v8H2z" fill="#fff"/><path d="M6 4.500h6l2 2v8H6z" fill="#fff"/>',
    paste: '<rect x="2" y="3" width="9" height="11" fill="#cdbf9e"/><rect x="4.500" y="1.500" width="4" height="3" fill="#999"/><path d="M7 6.500h7v8H7z" fill="#fff"/>',
    match: '<rect x="2" y="1.500" width="11" height="11" fill="#9cb8dc"/><rect x="3" y="2.500" width="9" height="3" fill="#3f6ea8" stroke="none"/><path d="M6 14l3-4 3-2 3 2-4 2-1 2z" fill="' + O + '" stroke="' + O + '"/>',
    blockedit: '<path d="M1.500 6h9v7h-9z" stroke-dasharray="2 1"/><circle cx="3.500" cy="13.500" r="1.500" fill="#fff"/><circle cx="9.500" cy="13.500" r="1.500" fill="#fff"/><path d="M12 1l1 3 2 1-3 1-1 3-.5-3-2.500-1 2.500-1z" fill="#f0b020" stroke="' + O + '" stroke-width=".5"/>',
    pan: '<path d="M2 9l2-2 3 1 1-2 3 1 2 3-1 4H6z" fill="#ccd2da"/><path d="M4 11l7-3" /><path d="M13 .500v5M10.500 3h5" stroke="#333" stroke-width="1.300"/>',
    undo: '<path d="M13 13c1-5-2-8-8-7" stroke="#234f8c" stroke-width="2.400"/><path d="M6 1.500L1 6l5 4.500z" fill="#234f8c" stroke="none"/>',
    redo: '<path d="M3 13c-1-5 2-8 8-7" stroke="#c5c4b8" stroke-width="2.400"/><path d="M10 1.500L15 6l-5 4.500z" fill="#c5c4b8" stroke="none"/>',
    drop: '<path d="M5 6h6L8 9z" fill="#234f8c" stroke="none"/>',
    zoom: mag,
    zoomb: mag.replace('#dfe9f6', '#bfd5ef').replace('stroke-width="2.400"', 'stroke-width="2.400" stroke="#997a55"'),
    zoomwin: '<circle cx="6.500" cy="6.500" r="5" fill="#e6e6e6"/><rect x="4" y="4" width="5" height="5"/><path d="M10.500 10.500l2 2" stroke-width="2"/><path d="M13 14.500h2.500v-2.500z" fill="#111"/>',
    prop: '<rect x="3" y="1.500" width="10" height="13" fill="#fff"/><rect x="4.500" y="3" width="7" height="5" fill="#3f6ea8" stroke="none"/><path d="M5 11h6"/>',
    palette: '<path d="M3 2h10v12H3zM6.500 2v12M9.500 2v12M3 5h10M3 8h10M3 11h10"/>',
    grid: '<rect x="2.500" y="2" width="11" height="12" fill="#ddd"/><path d="M2.500 5.500h11M2.500 9h11M6 2v12"/>',
    tool: '<path d="M3 2h4l1 2h5v10H3z" fill="#e8e8e8"/><path d="M5 7h6M5 10h6"/>',
    stamp: '<path d="M2 11l6-7 6 5-3 3H4z" fill="#ddd"/><path d="M2 13h12" stroke-width="1.500"/><path d="M6 9l4-3" />',
    tpal: '<rect x="2" y="1.500" width="6" height="5" stroke-dasharray="1.500 1"/><rect x="9" y="1.500" width="5" height="5" /><rect x="2" y="8" width="5" height="6" stroke-dasharray="1.500 1"/><rect x="8" y="8" width="7" height="6" fill="#e4e4e4"/><path d="M10 11h3"/>',
    calc: '<rect x="3" y="1.500" width="10" height="13" fill="#e8e8e8"/><path d="M5 4h6M5 7h1.500M7.500 7H9M10 7h1.500M5 9.500h1.500M7.500 9.500H9M10 9.500h1.500M5 12h1.500M7.500 12H9M10 12h1.500"/>',
    help: '<rect x="1.500" y="1.500" width="13" height="13" fill="#2a6cb6" stroke="#1d4f8c"/><text x="4.500" y="12.500" font-size="11" font-weight="700" fill="#fff" stroke="none" font-family="Liberation Sans">?</text>',
    stylea: '<text x="0" y="13" font-size="14" font-family="Liberation Serif" fill="#333" stroke="none">A</text><path d="M9 14l5-7 1.500 1-4 6z" fill="' + O + '" stroke="none"/>',
    styled: '<path d="M1.500 8v6M14.500 8v6M2 12h12" stroke-width="1"/><path d="M5 10l7-8 2 1.500-6 7z" fill="' + O + '" stroke="#7a4a20"/>',
    stylet: '<rect x="1.500" y="2" width="11" height="11" fill="#fff"/><path d="M1.500 5h11M1.500 8h11M6 2v11"/><path d="M8 14l5-6 2 1-5 6z" fill="' + O + '" stroke="none"/>',
    layers: '<path d="M3 2h5v3h5v9H3z" fill="#fff"/><path d="M3 5h5M5 8h6M5 11h6" /><rect x="8" y="9" width="5" height="5" fill="#9cb8dc" />',
    bulb: '<circle cx="8" cy="6" r="4" fill="#fff6a8" stroke="#c9a820"/><path d="M6.500 10.500h3v3h-3z" fill="#aaa" stroke="#777"/>',
    sun: '<circle cx="8" cy="8" r="5.500" fill="#f2de30" stroke="#3c6dc0" stroke-width="1.200"/>',
    freeze: '<circle cx="8" cy="8" r="5" fill="#a8c8e8" stroke="#6d8dbc" stroke-dasharray="2 1" stroke-width="1.500"/><circle cx="8" cy="8" r="2" fill="#dfe9f6"/>',
    lock: '<path d="M4 7V4a3 3 0 0 1 6 0" stroke="#333"/><rect x="5" y="6" width="8" height="8" fill="#f0d838" stroke="#a08818"/>',
    box: '<rect x="3" y="3" width="10" height="10" fill="#fff" stroke="#333"/>',
    layerprev: '<path d="M2 8l6-5 6 3-6 4z" fill="#cfe0f2" stroke="' + B + '"/><path d="M2 11l6 3 6-4M2 13.500l6 2 6-3"/><path d="M10 1l1 2 2 .500" stroke="' + O + '"/>',
    layerstate: '<path d="M4 2l8 2-1 4H3zM3 8l8 1-1 5H2z" fill="#fff"/><path d="M1 4l3-2 1 3" stroke="' + R + '"/>',
    sbox: '<path d="M2 5l3-3h9v9l-3 3H2z" fill="#dfdfdf"/><path d="M2 5h9v9M11 5l3-3"/>',
    wedge: '<path d="M3 2l11 11-3 1.500H3z" fill="#dfdfdf"/><path d="M3 2l8 12.500"/>',
    cone: '<path d="M8 2L3 12c1 2 9 2 10 0z" fill="#eee"/><path d="M8 2v12"/>',
    sphere: '<circle cx="8" cy="8" r="6.500" fill="#cfd4da"/><circle cx="7" cy="6.500" r="3" fill="#fff" stroke="none"/>',
    cyl: '<rect x="2" y="2" width="12" height="12" rx="3" fill="#e2e2e2"/>',
    torus: '<circle cx="8" cy="8" r="6.500" fill="#ddd"/><circle cx="8" cy="8" r="3.800"/><circle cx="8" cy="8" r="2" fill="#fff"/>',
    helix: '<path d="M3 3h10M3 3c-1 2 10 1 10 3s-11 1-10 3 10 1 10 3-11 1-10 2" stroke-width="1.500"/>',
    press: '<path d="M2 6l4-3h8v8l-4 3H2z" fill="#bcd6f0" stroke="' + B + '"/><path d="M2 6h8v8M10 6l4-3" stroke="' + B + '"/><path d="M6 12.500V8M4.500 9.500L6 8l1.500 1.500" stroke="#222"/>',
    sweep: '<path d="M3 8a5 5 0 0 1 10-2" stroke="' + B + '" stroke-width="1.800"/><rect x="6" y="9" width="7" height="5" fill="#fff"/><circle cx="7" cy="5" r="2.500"/>',
    loft: '<ellipse cx="8" cy="4" rx="6" ry="2.500" stroke="' + B + '" fill="#dfe9f6"/><ellipse cx="9" cy="12" rx="5" ry="2" fill="#dfe9f6" stroke="' + B + '"/><path d="M2 4v6l2 3M14 4v8"/>',
    union: '<circle cx="6" cy="8" r="4.500" fill="#9cc0e8" stroke="' + B + '"/><circle cx="10" cy="8" r="4.500" fill="#fff" fill-opacity=".5" stroke="#666"/>',
    subtract: '<circle cx="8" cy="8" r="6.500" stroke="' + R + '" stroke-width="1.600"/><circle cx="8" cy="8" r="5" stroke="#3a9a3a"/><circle cx="8" cy="8" r="2.800" fill="#d3dff0" stroke="' + B + '"/>',
    intersect: '<path d="M6 2h5v5h-5zM2 7h5v7H2zM9 8h5v5H9z" stroke="' + B + '" fill="#e2ecf7"/><path d="M2 7l4-5M7 7l4-5" stroke="' + B + '"/>',
    vnamed: '<path d="M3 1.500h6l3 3v3" /><path d="M3 1.500v12h3"/><rect x="7" y="9" width="7" height="5" fill="#ccc"/><path d="M5 3l-3 3 3 2" stroke="#333"/>',
    vtop: cube('#777'), vbot: cube('#777'), vleft: cube('#777'), vright: cube('#777'),
    vfront: cube('#8a929c', 'M3 5.500h8v8.500H3z'),
    vback: cube('#6c7480', 'M5.500 2.500h8v8.500h-8z'),
    iso1: '<path d="M8 1.500l6 3.500v6l-6 3.500L2 11V5z" fill="#fff"/><path d="M2 5l6 3.500V14.500L2 11z" fill="#777"/><path d="M8 8.500L14 5"/>',
    iso2: '<path d="M8 1.500l6 3.500v6l-6 3.500L2 11V5z" fill="#fff"/><path d="M14 5L8 8.500V14.500l6-3.500z" fill="#999"/><path d="M8 8.500L2 5"/>',
    iso3: '<path d="M8 1.500l6 3.500v6l-6 3.500L2 11V5z" fill="#fff"/><path d="M8 1.500L14 5 8 8.500z" fill="#777"/><path d="M2 5l6 3.500"/>',
    iso4: '<path d="M8 1.500l6 3.500v6l-6 3.500L2 11V5z" fill="#fff"/><path d="M8 1.500L2 5l6 3.500z" fill="#777"/><path d="M8 8.500V14.500"/>',
    camera: '<rect x="1.500" y="4.500" width="12" height="10" rx="1" fill="#e6e6e6"/><circle cx="7.500" cy="9.500" r="3" fill="#fff"/><circle cx="12.500" cy="3.500" r="2.500" fill="#ee7020" stroke="none"/>',
    chev: '<path d="M1 3l3.500 3.500L8 3" stroke="#1f3f78" stroke-width="1.800"/>',
    chevg: '<path d="M1 3l3.500 3.500L8 3" stroke="#aaa" stroke-width="1.500"/>',
    chevup: '<path d="M1 6l3.500-3.500L8 6" stroke="#1f3f78" stroke-width="1.800"/>',
    chevl: '<path d="M6 1L2.500 4.500 6 8" stroke="#1f3f78" stroke-width="1.800"/>',
    chevr: '<path d="M3 1l3.500 3.500L3 8" stroke="#1f3f78" stroke-width="1.800"/>',
    comm: '<path d="M3 13h10M4 10l7-6M4 4l7 6M6 2h5" stroke="#333"/>',
    star: '<path d="M8 1.500l2 4.500 4.500.500-3.500 3 1 4.500L8 11.500 4 14l1-4.500-3.500-3L6 6z" fill="#eee" stroke="#333"/>',
    wmin: '<path d="M3 11.500h9" stroke="#ddd" stroke-width="2"/>',
    wmax: '<rect x="3" y="5" width="7" height="7" stroke="#ddd" stroke-width="1.500"/><path d="M6 5V3h7v7h-3" stroke="#ddd"/>',
    wclose: '<path d="M4 4l8 8M12 4l-8 8" stroke="#eee" stroke-width="2"/>',
    line: '<path d="M2.500 13.500l11-11"/><circle cx="2.500" cy="13.500" r="1.200" fill="#333"/><circle cx="13.500" cy="2.500" r="1.200" fill="#333"/>',
    xline: '<path d="M2 14L14 2M2 14v-4M2 14h4M14 2v4M14 2h-4" stroke="#333"/>',
    pline: '<path d="M1.500 12h5M9 3h2a3.500 3.500 0 0 1 0 7H6"/><circle cx="2" cy="12" r="1.200" fill="#333"/><circle cx="9" cy="3" r="1.200" fill="#333"/>',
    polygon: '<path d="M8 1.500L14.500 6.500 12 14.500H4L1.500 6.500z" fill="#eee"/>',
    rect: '<rect x="2" y="3.500" width="12" height="9" fill="#dfe3e8"/><circle cx="2" cy="12.500" r="1.200" fill="#333"/><circle cx="14" cy="3.500" r="1.200" fill="#333"/>',
    arc: '<path d="M2 14c0-6 5-11 12-11"/><circle cx="2" cy="14" r="1.200" fill="#333"/><circle cx="14" cy="3" r="1.200" fill="#333"/>',
    circle: '<circle cx="8" cy="8" r="6.500"/><path d="M8 8l3-3" stroke="#333"/><circle cx="8" cy="8" r="1"/>',
    cloud: '<path d="M3 4a3 3 0 0 1 5-2 3 3 0 0 1 5 2 3 3 0 0 1 0 6 3 3 0 0 1-3 4.500 3 3 0 0 1-5-1A3 3 0 0 1 3 8 2.500 2.500 0 0 1 3 4z" fill="#f2f2f2"/>',
    spline: '<path d="M1.500 13c3-9 5-1 7-4s2-7 6-6" stroke-width="1.300"/>',
    ellipse: '<ellipse cx="8" cy="8" rx="6.800" ry="4.500"/><circle cx="8" cy="8" r="1" fill="#333"/><path d="M1 8h2M13 8h2" stroke="#333"/>',
    earc: '<path d="M14 10C13 13 4 14 2 9 1 5 6 3 10 3"/><path d="M10 3l-2-1.500M10 3L8 5" stroke="#333"/>',
    insert: '<path d="M2 4h8M2 4v6h7V6" /><circle cx="11.500" cy="9" r="2.500" fill="#fff"/><path d="M2 12h2M8 12h2"/>',
    mkblock: '<path d="M3 10V4h8v6z" stroke-dasharray="2 1"/><circle cx="6" cy="12" r="3" fill="#fff"/><circle cx="13" cy="12" r="2" fill="#fff"/>',
    point: '<circle cx="8" cy="8" r="1.200" fill="#444"/>',
    hatch: '<rect x="2" y="2" width="12" height="12"/><path d="M2 6l4-4M2 10l8-8M2 14L14 2M6 14l8-8M10 14l4-4" stroke-width=".8"/>',
    gradient: '<rect x="2" y="2" width="12" height="12" fill="#9aa4b0"/><circle cx="2" cy="2" r="1" fill="#333"/><circle cx="14" cy="2" r="1" fill="#333"/><circle cx="2" cy="14" r="1" fill="#333"/><circle cx="14" cy="14" r="1" fill="#333"/>',
    region: '<path d="M2 4h7l5 5v5H2z" fill="#fff"/><circle cx="7" cy="9" r="2.500"/>',
    table: '<rect x="1.500" y="2" width="13" height="12" fill="#fff"/><rect x="1.500" y="2" width="13" height="3" fill="#9aa4b0"/><path d="M1.500 8h13M1.500 11h13M6 5v9M10 5v9"/>',
    mtext: '<text x="2.500" y="14" font-size="16" font-family="Liberation Sans" fill="#333" stroke="none">A</text>',
    orbit: '<ellipse cx="8" cy="9" rx="7" ry="3.500" stroke="#333"/><circle cx="8" cy="8" r="3" fill="' + B + '" stroke="none"/><path d="M8 1v14M6 3l2-2 2 2" stroke="#333"/>',
    dlin: dim('<path d="M2.500 8h11" stroke="#333"/><path d="M4.500 6.500L2.500 8l2 1.500M11.500 6.500L13.500 8l-2 1.500"/>').replace('M2.500 2v12M13.500 2v12', 'M2.500 2v12M13.500 2v12M2.500 2.500h11M2.500 13.500h11'),
    dali: '<path d="M2 3l12 9M5 1L2 4M14 9l-3 4M3 2h1M12 13h1" stroke="#444"/>',
    darc: '<path d="M2 14c0-6 5-11 12-11" stroke="#444" stroke-width="1.800"/><path d="M5 14c0-4 4-8 9-8"/><circle cx="12" cy="4" r="1.500" fill="#222"/>',
    dord: '<path d="M4 14V7h8M4 7L8 2" /><circle cx="4" cy="7" r="1.200" fill="' + B + '" stroke="none"/><circle cx="12" cy="3" r="1.200" fill="' + B + '" stroke="none"/><circle cx="13" cy="11" r="1.200" fill="' + B + '" stroke="none"/><path d="M4 14h10M8 7v7"/>',
    drad: '<circle cx="8" cy="8" r="6.500"/><path d="M8 8L4 4" stroke="#333"/><circle cx="8" cy="8" r=".8" fill="#333"/>',
    djog: '<path d="M3 13a8 8 0 0 1 10-10"/><path d="M13 3l-5 5 3 1-5 4" stroke="#333"/>',
    ddia: '<circle cx="8" cy="8" r="6.500" fill="#e6e6e6"/><path d="M3.500 3.500l9 9" stroke="#333" stroke-width="1.300"/>',
    dang: '<path d="M2 14h12L9 3M5 14a6 6 0 0 1 2-5" stroke="#444"/><path d="M2 14L9 3"/>',
    dquick: dim('<path d="M3 3h10M3 13h10"/><path d="M9 4L6 8h3L6 12" stroke="#e89010" stroke-width="1.500"/>'),
    dbase: '<path d="M2.500 2v12M8 6v8M13.500 6v8"/><path d="M2.500 5h11M2.500 9h5.500" stroke="#333"/>',
    dcont: '<path d="M2 3v11M6 3v11M10 3v11M14 3v11"/><path d="M2 8h12" stroke="#333" stroke-dasharray="2 1"/>',
    dspace: '<path d="M2 2v12M14 2v12M6 5v6M10 5v6M2 8h12" stroke="#444"/>',
    dbreak: '<path d="M3 3v10M13 3v10M3 8h3M10 8h3M6 6l2 4 2-4" stroke="#333"/>',
    dtol: '<rect x="1" y="3" width="14" height="9" fill="#fff" stroke="#333"/><path d="M5 3v9M11 3v9"/><path d="M2 7.500h2M8 5v5" stroke="#111" stroke-width="1.500"/>',
    dcen: '<circle cx="8" cy="8" r="6.500"/><path d="M8 6v4M6 8h4" stroke="#333"/>',
    dinsp: '<path d="M1 9l3-4 3 7 3-8 2 5 3-1" stroke="#333"/><circle cx="4" cy="5" r=".8" fill="#333"/>',
    djogl: '<path d="M2 14h12M2 11v6M14 11v6M3 13L13 3l1.500 1.500L5 14" fill="#fff" stroke="#999"/><path d="M11 5l2 2" stroke="#f0a030" stroke-width="2"/>',
    dupd: '<path d="M2.500 2v12M13.500 2v12M2.500 4h11"/><path d="M5 9a3 3 0 0 1 6 0 3 3 0 0 1-6 2" stroke="#3a9a3a" stroke-width="1.500"/>',
    dreas: '<path d="M2 14h12M2 11v5M14 11v5"/><path d="M5 12l6-7 3 1-5 6z" fill="#7a4a20" stroke="' + O + '"/>',
    first: '<path d="M1.500 1.500h9v13h-9z" fill="#ddd" stroke="#ccc"/><path d="M3.500 5v6M8 5L5 8l3 3z" fill="#aaa" stroke="#aaa"/>',
    prev: '<path d="M1.500 1.500h9v13h-9z" fill="#ddd" stroke="#ccc"/><path d="M8 4L4 8l4 4z" fill="#999" stroke="none"/>',
    next: '<path d="M1.500 1.500h9v13h-9z" fill="#ddd" stroke="#ccc"/><path d="M4 4l4 4-4 4z" fill="#999" stroke="none"/>',
    last: '<path d="M1.500 1.500h9v13h-9z" fill="#ddd" stroke="#ccc"/><path d="M8.500 5v6M3 5l3 3-3 3z" fill="#aaa" stroke="#aaa"/>',
    mlead: wave + '<path d="M2.500 13V9M2.500 13H6" stroke="#222"/>',
    mleadadd: wave + '<path d="M4.500 1v5M2 3.500h5" stroke="#222"/><path d="M2.500 13V9" stroke="#222"/>',
    mleaddel: wave + '<path d="M2 2l4 4M6 2L2 6" stroke="' + R + '" stroke-width="1.300"/><path d="M2.500 13V9" stroke="#222"/>',
    mleadali: '<path d="M2 8l4-4M2 12l4-1"/><circle cx="3" cy="8" r="1.500"/><circle cx="3" cy="12" r="1.500"/><circle cx="10" cy="5" r="2.500"/><circle cx="10" cy="11" r="2.500"/><path d="M14 1v14" stroke-width="1.600"/>',
    mleadcol: '<path d="M2 14l3-7h2M2 14V10" stroke="#333"/><circle cx="11" cy="5" r="2.800"/><circle cx="11" cy="11" r="2.800"/>',
    mleadstyle: '<path d="M2 14l2-6 4-3" stroke="#333"/><circle cx="11" cy="4" r="2.500"/><path d="M5 14l6-6 3-1-3 7z" fill="#7a4a20" stroke="' + O + '"/>',
    erase: '<path d="M6 9l6-7 2 2-5 7z" fill="#e8c070" stroke="#8a5a20"/><path d="M3 11l3-2 3 2-1 2H3z" fill="#c04a14" stroke="#8a3a10"/><path d="M2 15h12" stroke="#333" stroke-width="1.200"/>',
    mcopy: '<circle cx="3.500" cy="3" r="2"/><path d="M7 2h5v3" stroke="#333"/><circle cx="10" cy="10" r="3" stroke="' + B + '" stroke-width="1.300"/><circle cx="12" cy="12.500" r="2.500" stroke="' + B + '" stroke-width="1.300"/>',
    mirror: '<path d="M6 2L2 14h4z" fill="#fff"/><path d="M10 2l4 12h-4z" fill="#9cc0e8" stroke="' + B + '"/><path d="M8 1v14" stroke="#333"/>',
    offset: '<path d="M2 14V11h3V8a3 3 0 0 1 6 0h3v6z" fill="#fff"/><path d="M2 11V8h1a5 5 0 0 1 10 0" stroke="' + B + '" stroke-width="1.300"/>',
    array: '<rect x="1.500" y="2" width="5" height="5"/><rect x="9" y="2" width="5" height="5" stroke="' + B + '" stroke-width="1.200"/><rect x="1.500" y="9" width="5" height="5" stroke="' + B + '" stroke-width="1.200"/><rect x="9" y="9" width="5" height="5" stroke="' + B + '" stroke-width="1.200"/>',
    move: '<path d="M8 1v14M1 8h14" stroke="#333" stroke-width="1.300"/><path d="M8 .500L6 3h4zM8 15.500L6 13h4zM.500 8L3 6v4zM15.500 8L13 6v4z" fill="#333" stroke="none"/><rect x="6" y="6" width="4" height="4" fill="#fff" stroke="#333"/>',
    rotate: '<path d="M9 2.500a6 6 0 1 1-5 2" stroke-width="1.500"/><path d="M6 .500L9.500 2.500 6 5z" fill="#333" stroke="none"/>',
    scale: '<path d="M2 1.500h12v12H7" stroke="' + B + '" stroke-width="1.300"/><rect x="1.500" y="8" width="6" height="6.500" fill="#fff" stroke="#444"/>',
    stretch: '<path d="M2 2h5l7 12H2z" fill="#fff"/><path d="M7 2l7 12H8z" fill="#bcd6f0" stroke="' + B + '"/><path d="M5 11h6M9 9.500L11 11l-2 1.500" stroke="#111"/>',
    trim: '<path d="M2 13l4-5" stroke="' + B + '" stroke-width="1.300"/><path d="M8 8h7" stroke="' + B + '" stroke-dasharray="1.500 1"/><path d="M9 4l-1 8" stroke="' + B + '"/>',
    extend: '<path d="M1 8h7" stroke="#444" stroke-dasharray="3 1"/><path d="M9 8h2" stroke="' + B + '" stroke-width="1.300"/><path d="M9 14l5-12" stroke="' + B + '" stroke-width="1.300"/>',
    breakp: '<path d="M2 14V6h10" stroke="#333"/><path d="M9 5h4" stroke="' + B + '" stroke-width="2.200"/>',
    brk: '<path d="M2 6v8h12V6M2 6h1M13 6h1" stroke="#333"/><path d="M4 4h2.500M9.500 4H12" stroke="' + B + '" stroke-width="2.200"/>',
    join: '<path d="M1 8h14" stroke="' + B + '"/><path d="M5 6l2 2-2 2M11 6L9 8l2 2" stroke="' + B + '" stroke-width="1.200"/>',
    chamfer: '<path d="M2 14V8l6-6h6v12z" fill="#fff" stroke="#444"/><path d="M2 8l6-6" stroke="' + B + '" stroke-width="1.300"/>',
    fillet: '<path d="M2 14V8a6 6 0 0 1 6-6h6v12z" fill="#fff" stroke="#444"/><path d="M2 8a6 6 0 0 1 6-6" stroke="' + B + '" stroke-width="1.300"/>',
    explode: '<path d="M5 2l3 1-1 3H3z" fill="#fff" stroke="' + B + '"/><path d="M2 7h7v7H2z" stroke="' + B + '" fill="#dfe9f6"/><path d="M10 4h5v5M10 9l2 2M13 10v3h-3" stroke="' + B + '"/>',
    ofront: '<rect x="4.500" y="6" width="9" height="8"/><rect x="1.500" y="2" width="10" height="8" fill="#9aa0a8"/>',
    oback: '<rect x="1.500" y="2" width="9" height="7" fill="#fff"/><rect x="5" y="5" width="7" height="5" fill="#fff"/><rect x="7" y="10" width="7" height="4.500" fill="#9aa0a8"/>',
    oabove: '<rect x="1.500" y="2" width="9" height="7" fill="#fff"/><rect x="5" y="6" width="9.500" height="8" fill="#9aa0a8"/>',
    obelow: '<rect x="5" y="8" width="9.500" height="6.500" fill="#9aa0a8"/><rect x="1.500" y="2" width="10" height="8" fill="#fff"/>',
    ssnap: '<path d="M3 3v10h10M5 3h1M9 3h1M12 3h1M12 7h1M12 10h1" stroke="#444"/>',
    sgrid: '<path d="M1 2h14M1 5h14M1 8h14M1 11h14M1 14h14M2 1v14M5 1v14M8 1v14M11 1v14M14 1v14" stroke="#222"/>',
    sortho: '<path d="M3 1v13h11" stroke="#222"/>',
    spolar: '<path d="M9 4A5 5 0 1 0 11 10" stroke="#333"/><path d="M6 9l6-5M6 9h8" stroke="#333"/>',
    sosnap: '<rect x="3" y="3" width="10" height="12" fill="#fff" stroke="#333"/><rect x="1" y="1" width="4" height="4" fill="#eda" stroke="' + O + '"/>',
    sotrack: '<path d="M2 13h11M3 13l7-8" stroke="#333" stroke-width="1.300"/>',
    sducs: '<path d="M2 14h12M2 14V2" stroke="#333"/><path d="M3 13l8-9" stroke="#333"/><path d="M11 2l2 3 2-2-2 3" stroke="#e8a010" stroke-width="1.500"/>',
    sdyn: '<path d="M2 8h12M6 5v8" stroke="#222" stroke-width="1.500"/><rect x="8" y="9" width="5" height="3" stroke="#222"/>',
    slw: '<path d="M8 2v12M2 8h12" stroke="#111" stroke-width="2"/>',
    sqp: '<rect x="3" y="2" width="10" height="12" fill="#ddd" stroke="#333"/><path d="M5 5h6M7 5v7M5 9h6M5 12h6" stroke="#333"/>',
    slayout: '<rect x="2" y="2" width="11" height="11" fill="#ddd" stroke="#333"/><path d="M5 4v6h6" stroke="#333" stroke-width="1.500"/><path d="M1 14h14" stroke="#222" stroke-width="1.500"/>',
    slayouts: '<rect x="1.500" y="2.500" width="6" height="7" fill="#eee" stroke="#222"/><rect x="8.500" y="2.500" width="6" height="7" fill="#eee" stroke="#222"/><path d="M1 13h14" stroke="#222" stroke-width="1.600"/>',
    swheel: '<circle cx="8" cy="8" r="7" fill="#c8c8c8" stroke="#666"/><circle cx="8" cy="8" r="4" fill="#ddd" stroke="#444"/><path d="M8 6v4M6 8h4" stroke="#222"/>',
    sshow: '<rect x="2" y="1.500" width="12" height="13" fill="#eee" stroke="#333"/><path d="M2 5h12M5 1.500V5M8 1.500V5M11 1.500V5" stroke="#333"/><path d="M6.500 7.500l4 2.500-4 2.500z" fill="#222" stroke="none"/>',
    anno: '<path d="M8 2v5M8 7l-5 7M8 7l5 7" stroke="#222" stroke-width="1.500"/>',
    annoa: '<path d="M7 2v5M7 7l-4 7M7 7l4 7" stroke="#333" stroke-width="1.300"/><circle cx="12" cy="11" r="2.500" fill="#f0a820" stroke="none"/>',
    annob: '<path d="M8 2v5M8 7l-5 7M8 7l5 7M4 4l8 8" stroke="#8a8a8a" stroke-width="1.300"/>',
    gear: '<circle cx="8" cy="8" r="5" stroke="#333" stroke-width="2.600" stroke-dasharray="2 1"/><circle cx="8" cy="8" r="4" stroke="#333"/>',
    slock: '<path d="M8 6V3.500a2.500 2.500 0 0 1 5 0V6" stroke="#222" stroke-width="1.300"/><rect x="2" y="7" width="8" height="7.500" fill="#eee" stroke="#222"/>',
    stray: '<g transform="translate(4 0)"><path d="M3 2l9 3v9H3z" fill="#d6e2ec" stroke="#333"/><path d="M1 6h12M5 2v12" stroke="#333"/><path d="M6 11l3 3 6-7" stroke="#18a018" stroke-width="2.200"/></g>',
    swin: '<rect x="2" y="2" width="12" height="12" fill="#eee" stroke="#222"/><path d="M2 3h12" stroke="#222" stroke-width="2"/>'
  };

  document.querySelectorAll('[data-icons]').forEach(function (el) {
    const cell = el.dataset.cell;
    const vertical = el.dataset.sep === 'v';
    el.innerHTML = el.dataset.icons.split(' ').map(function (name) {
      if (name === '|') {
        return vertical
          ? '<span class="block h-[5px] py-[2px] shrink-0"><span class="block h-px bg-[#d0cebf]"></span></span>'
          : '<span class="block w-[5px] h-full px-[2px] shrink-0"><span class="block w-px h-full bg-[#d0cebf]"></span></span>';
      }
      return '<span class="flex items-center justify-center shrink-0 ' + cell + '">' +
        '<svg class="w-[16px] h-[16px] max-w-full shrink-0" viewBox="0 0 16 16" fill="none" stroke="#666">' + (I[name] || '') + '</svg></span>';
    }).join('');
  });
</script>
</body>
</html>
